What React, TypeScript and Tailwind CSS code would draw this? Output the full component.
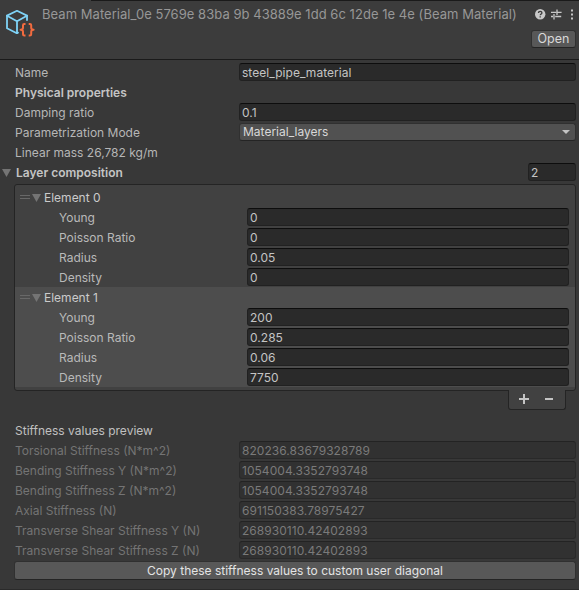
import type { ReactNode } from 'react';
import { clsx } from 'clsx';

interface Layer {
  young: string;
  poisson: string;
  radius: string;
  density: string;
}

const layers: Layer[] = [
  { young: '0', poisson: '0', radius: '0.05', density: '0' },
  { young: '200', poisson: '0.285', radius: '0.06', density: '7750' },
];

const stiffness = [
  { label: 'Torsional Stiffness (N*m^2)', value: '820236.83679328789' },
  { label: 'Bending Stiffness Y (N*m^2)', value: '1054004.3352793748' },
  { label: 'Bending Stiffness Z (N*m^2)', value: '1054004.3352793748' },
  { label: 'Axial Stiffness (N)', value: '691150383.78975427' },
  { label: 'Transverse Shear Stiffness Y (N)', value: '268930110.42402893' },
  { label: 'Transverse Shear Stiffness Z (N)', value: '268930110.42402893' },
];

function Field({ value, disabled, className }: { value: string; disabled?: boolean; className?: string }) {
  return (
    <div
      className={clsx(
        'h-[18px] rounded-[3px] border pl-[2px] leading-[17px] tracking-[0.04px]',
        disabled
          ? 'border-[#292929] border-t-[#232323] bg-[#313131] text-[#7a7a7a]'
          : 'border-[#212121] border-t-[#0d0d0d] bg-[#2a2a2a] text-[#c4c4c4]',
        className
      )}
    >
      {value}
    </div>
  );
}

function Row({ label, disabled, children }: { label: string; disabled?: boolean; children?: ReactNode }) {
  return (
    <div className="flex h-5 pl-[15px] pr-[3px]">
      <div className={clsx('w-56 shrink-0 leading-[19px]', disabled ? 'text-[#747474]' : 'text-[#b6b6b6]')}>
        {label}
      </div>
      {children}
    </div>
  );
}

function Foldout() {
  return (
    <svg className="h-2 w-[9px] shrink-0" viewBox="0 0 9 8" fill="#747474">
      <path d="M0 0h9L4.5 8z" />
    </svg>
  );
}

function LayerElement({ index, layer, selected }: { index: number; layer: Layer; selected?: boolean }) {
  const props = [
    ['Young', layer.young],
    ['Poisson Ratio', layer.poisson],
    ['Radius', layer.radius],
    ['Density', layer.density],
  ];

  return (
    <div className={clsx('h-[100px] pl-[5px] pr-[6px] pt-px', selected && 'bg-[#4d4d4d]')}>
      <div className="flex h-5 items-center">
        <div className="mb-[3px] mr-[2px] h-1 w-[10px] border-y border-[#686868]" />
        <div className="mb-px flex">
          <Foldout />
        </div>
        <span className="mb-px ml-[3px] leading-[19px] text-[#cbcbcb]">Element {index}</span>
      </div>
      {props.map(([label, value]) => (
        <div key={label} className="flex h-5 pl-[39px]">
          <span className="w-[188px] shrink-0 leading-[19px] text-[#b9b9b9]">{label}</span>
          <Field value={value} className="flex-1" />
        </div>
      ))}
    </div>
  );
}

function Header() {
  return (
    <header className="h-[60px] border-b border-[#1a1a1a] bg-[#3c3c3c]">
      <div className="ml-[91px] h-px bg-[#1a1a1a]" />
      <div className="flex pl-[5px] pr-[3px]">
        <svg className="mt-[7px] h-[30px] w-[30px] shrink-0" viewBox="0 0 30 30" fill="none">
          <g stroke="#7fd3f7" strokeWidth="1.8" strokeLinejoin="round" strokeLinecap="round">
            <path d="M13 24.7 11.8 25.2 2 20.2V7.6L12 2.8l10 4.8V12" />
            <path d="M2 7.8 12 13.2 22 7.8M12 13.2V25" />
          </g>
          <g stroke="#f26b3f" strokeWidth="2" strokeLinejoin="round">
            <path d="M20.5 16h-1.2q-1.3 0-1.3 1.3v2.5q0 2-2.4 2 2.4 0 2.4 2v2.5q0 1.3 1.3 1.3h1.2" />
            <path d="M23.7 16h1.2q1.3 0 1.3 1.3v2.5q0 2 2.4 2-2.4 0-2.4 2v2.5q0 1.3-1.3 1.3h-1.2" />
          </g>
        </svg>
        <h1 className="ml-[7px] mt-1 flex-1 whitespace-nowrap text-[13px] leading-[18px] tracking-[0.04px] text-[#979797]">
          Beam Material_0e 5769e 83ba 9b 43889e 1dd 6c 12de 1e 4e (Beam Material)
        </h1>
        <div className="mt-2 flex h-[11px] items-center text-[#c4c4c4]">
          <svg className="h-[11px] w-[11px]" viewBox="0 0 11 11" fill="none">
            <circle cx="5.2" cy="5.2" r="5.2" fill="#c8c8c8" />
            <path d="M3.5 4q0-1.6 1.7-1.6t1.7 1.5q0 .8-.9 1.2-.7.3-.7 1.1M5.2 7.2v1.4" stroke="#3c3c3c" strokeWidth="1.3" />
          </svg>
          <svg className="ml-[5px] h-[11px] w-[11px]" viewBox="0 0 11 11" stroke="#c8c8c8" strokeWidth="1.3" fill="none">
            <path d="M0 3.4h5.2M6 .6v5.4M6.6 3.4h4M0 7.5h2M3 5v5.4M4.2 7.5h6" />
          </svg>
          <svg className="ml-[8px] mr-[2px] h-[11px] w-[4px]" viewBox="0 0 4 11" fill="currentColor">
            <path d="M1 .5h2v2H1zM1 4.5h2v2H1zM1 8.5h2v2H1z" />
          </svg>
        </div>
      </div>
      <div className="-mt-2 flex justify-end pr-[3px]">
        <button className="h-[18px] w-[45px] rounded-[3px] border border-[#303030] border-b-[#242424] bg-[#585858] text-[12.5px] leading-[16px] text-[#d8d8d8]">
          Open
        </button>
      </div>
    </header>
  );
}

export default function App() {
  return (
    <div className="h-[590px] w-[579px] overflow-hidden border-b border-[#2a2a2a] bg-[#383838] font-['Inter',sans-serif] text-[12px]">
      <Header />
      <div className="pt-[3px]">
        <Row label="Name">
          <Field value="steel_pipe_material" className="flex-1" />
        </Row>
        <div className="h-5 pl-[15px] font-semibold leading-[19px] text-[#c4c4c4]">Physical properties</div>
        <Row label="Damping ratio">
          <Field value="0.1" className="flex-1" />
        </Row>
        <Row label="Parametrization Mode">
          <div className="flex h-[18px] flex-1 items-center justify-between rounded-[3px] border border-[#303030] border-b-[#242424] bg-[#515151] pl-[3px] pr-[5px] text-[#d8d8d8]">
            <span className="leading-[16px]">Material_layers</span>
            <svg className="h-1 w-2" viewBox="0 0 8 4" fill="#c4c4c4">
              <path d="M0 0h8L4 4z" />
            </svg>
          </div>
        </Row>
        <Row label="Linear mass 26,782 kg/m" />
        <div className="flex h-5 pl-[2px] pr-[3px]">
          <div className="mt-[6px]">
            <Foldout />
          </div>
          <span className="ml-[5px] flex-1 font-semibold leading-[19px] text-[#c4c4c4]">Layer composition</span>
          <Field value="2" className="w-12" />
        </div>

        <div className="ml-[14px] mr-[3px] mt-px h-[207px] rounded-[3px] border border-[#242424] bg-[#414141] pt-[2px]">
          {layers.map((layer, i) => (
            <LayerElement key={i} index={i} layer={layer} selected={i === 1} />
          ))}
        </div>
        {/* footer sits flush against the list and hides its bottom border */}
        <div className="relative -mt-px ml-[508px] flex h-5 w-[58px] items-center justify-center gap-4 rounded-b-[3px] border border-t-0 border-[#242424] bg-[#414141] pb-px pr-[2px]">
          <svg className="h-[10px] w-[10px]" viewBox="0 0 10 10" fill="#c4c4c4">
            <path d="M4 0h2v4h4v2H6v4H4V6H0V4h4z" />
          </svg>
          <svg className="h-[10px] w-2" viewBox="0 0 8 10" fill="#c4c4c4">
            <path d="M0 4h8v2H0z" />
          </svg>
        </div>

        <div className="mt-[11px] h-5 pl-[15px] leading-[19px] text-[#c0c0c0]">Stiffness values preview</div>
        {stiffness.map(({ label, value }) => (
          <Row key={label} label={label} disabled>
            <Field value={value} disabled className="flex-1" />
          </Row>
        ))}
        <button className="ml-[14px] block h-[19px] w-[562px] rounded-[3px] border border-[#303030] border-b-[#242424] bg-[#585858] leading-[17px] text-[#e4e4e4]">
          Copy these stiffness values to custom user diagonal
        </button>
      </div>
    </div>
  );
}
